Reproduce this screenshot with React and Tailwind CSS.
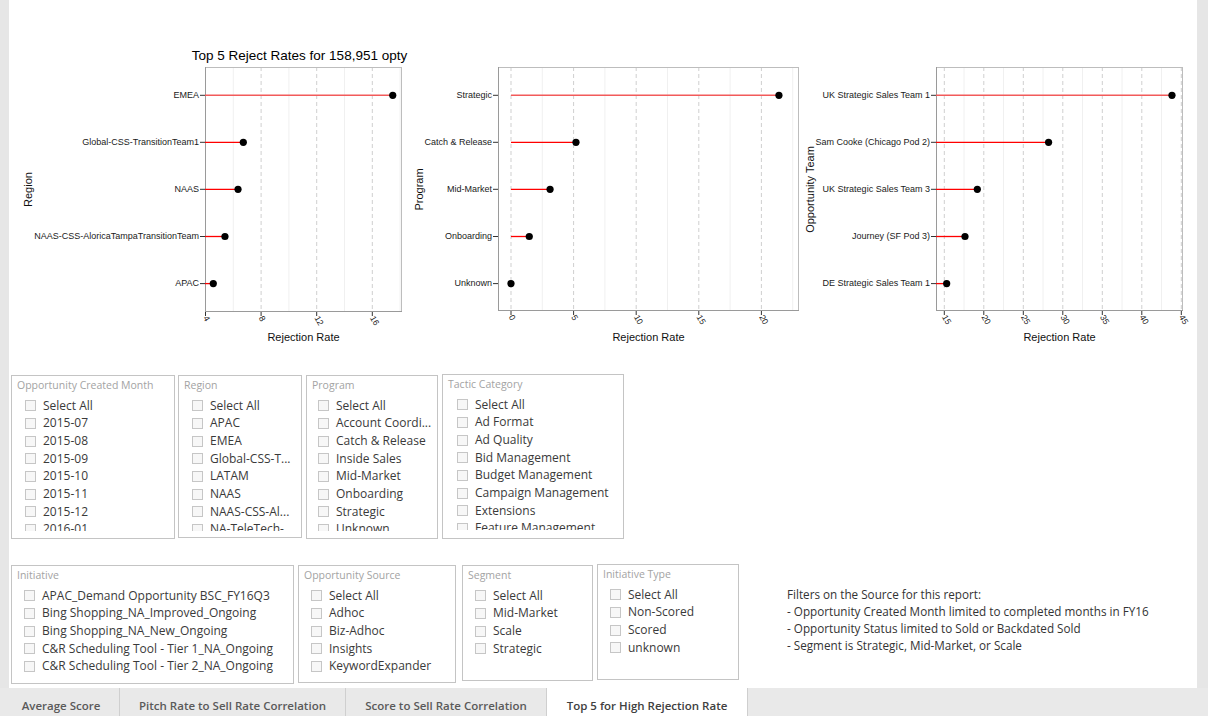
import React from 'react';

const ROWS_Y = [95.3, 142.3, 189.3, 236.5, 283.6];

const charts = [
  {
    vx: 9,
    vw: 401,
    panel: { l: 205, r: 402, t: 67, b: 312 },
    x0: 205.5,
    v0: 4,
    k: 13.9,
    ticks: [4, 8, 12, 16],
    minors: [6, 10, 14, 18],
    lineStart: 205,
    title: 'Top 5 Reject Rates for 158,951 opty',
    yTitle: 'Region',
    yTitleX: 32,
    rows: [
      ['EMEA', 17.47],
      ['Global-CSS-TransitionTeam1', 6.72],
      ['NAAS', 6.34],
      ['NAAS-CSS-AloricaTampaTransitionTeam', 5.4],
      ['APAC', 4.56],
    ],
  },
  {
    vx: 410,
    vw: 390,
    panel: { l: 498, r: 799, t: 67, b: 311 },
    x0: 511,
    v0: 0,
    k: 12.52,
    ticks: [0, 5, 10, 15, 20],
    minors: [2.5, 7.5, 12.5, 17.5, 22.5],
    lineStart: 511,
    yTitle: 'Program',
    yTitleX: 423,
    rows: [
      ['Strategic', 21.4],
      ['Catch & Release', 5.19],
      ['Mid-Market', 3.12],
      ['Onboarding', 1.46],
      ['Unknown', 0],
    ],
  },
  {
    vx: 800,
    vw: 397,
    panel: { l: 936, r: 1183, t: 67, b: 311 },
    x0: 944.3,
    v0: 15,
    k: 7.9,
    ticks: [15, 20, 25, 30, 35, 40, 45],
    minors: [17.5, 22.5, 27.5, 32.5, 37.5, 42.5],
    lineStart: 936,
    yTitle: 'Opportunity Team',
    yTitleX: 814,
    rows: [
      ['UK Strategic Sales Team 1', 43.82],
      ['Sam Cooke (Chicago Pod 2)', 28.2],
      ['UK Strategic Sales Team 3', 19.18],
      ['Journey (SF Pod 3)', 17.62],
      ['DE Strategic Sales Team 1', 15.3],
    ],
  },
];

function LollipopChart({ c }) {
  const { l, r, t, b } = c.panel;
  const sx = (v) => c.x0 + (v - c.v0) * c.k;
  const font = "'Liberation Sans', Arial, sans-serif";
  return (
    <svg width={c.vw} height={365} viewBox={`${c.vx} 0 ${c.vw} 365`} className="block shrink-0">
      {c.title && (
        <text x={299.5} y={60} textAnchor="middle" fontSize="13.5" fontFamily={font} fill="#000">
          {c.title}
        </text>
      )}
      <rect x={l} y={t} width={r - l} height={b - t} fill="#fff" />
      {c.minors.map((v) =>
        sx(v) < r ? <line key={'m' + v} x1={sx(v)} x2={sx(v)} y1={t} y2={b} stroke="#f0f0f0" strokeWidth="1" /> : null
      )}
      {c.ticks.map((v) => (
        <line key={'g' + v} x1={sx(v)} x2={sx(v)} y1={t} y2={b} stroke="#cfcfcf" strokeWidth="1" strokeDasharray="4 3" />
      ))}
      <rect x={l + 0.5} y={t + 0.5} width={r - l - 1} height={b - t - 1} fill="none" stroke="#bdbdbd" />
      <line x1={l + 0.5} x2={l + 0.5} y1={t} y2={b} stroke="#9a9a9a" />
      <line x1={l} x2={r} y1={b - 0.5} y2={b - 0.5} stroke="#9a9a9a" />
      {c.rows.map(([name, v], i) => {
        const y = ROWS_Y[i];
        return (
          <g key={name}>
            <line x1={l - 5} x2={l} y1={y} y2={y} stroke="#333" strokeWidth="1" />
            <text x={l - 6} y={y + 2.6} textAnchor="end" fontSize="9" fontFamily={font} fill="#1a1a1a">
              {name}
            </text>
            <line
              x1={c.lineStart}
              x2={sx(v)}
              y1={y}
              y2={y}
              stroke={i === 0 ? '#f25a5a' : '#ff0000'}
              strokeWidth={i === 0 ? 1.6 : 1.3}
            />
            <circle cx={sx(v)} cy={y} r={3.6} fill="#000" />
          </g>
        );
      })}
      {c.ticks.map((v) => (
        <g key={'t' + v}>
          <line x1={sx(v)} x2={sx(v)} y1={b} y2={b + 4} stroke="#333" />
          <text
            x={sx(v) - 2.5}
            y={b + 6}
            transform={`rotate(60 ${sx(v) - 2.5} ${b + 6})`}
            fontSize="8.5"
            fontFamily={font}
            fill="#222"
          >
            {v}
          </text>
        </g>
      ))}
      <text x={(l + r) / 2} y={341} textAnchor="middle" fontSize="11" fontFamily={font} fill="#111">
        Rejection Rate
      </text>
      <text
        x={c.yTitleX}
        y={189.5}
        transform={`rotate(-90 ${c.yTitleX} 189.5)`}
        textAnchor="middle"
        fontSize="11"
        fontFamily={font}
        fill="#111"
      >
        {c.yTitle}
      </text>
    </svg>
  );
}

function Slicer({ title, items, className, listH = 'h-[136px]', pl = 'pl-[13px]' }) {
  return (
    <div className={`border border-[#c4c4c4] bg-white overflow-hidden shrink-0 ${className}`}>
      <div className="pl-[5px] pt-[1px] h-[19px] text-[10.5px] leading-[16px] text-[#a3a3a3]">{title}</div>
      <div className={`${pl} pt-[2px] ${listH} overflow-hidden`}>
        {items.map((it) => (
          <div key={it} className="flex items-center h-[17.67px] whitespace-nowrap">
            <span className="w-[11px] h-[11px] border border-[#c6c6c6] bg-[#f7f7f7] shrink-0" />
            <span className="ml-[7px] text-[12px] text-[#3a3a3a] leading-none">{it}</span>
          </div>
        ))}
      </div>
    </div>
  );
}

const tabs = [
  { label: 'Average Score', w: 'w-[117px]' },
  { label: 'Pitch Rate to Sell Rate Correlation', w: 'w-[226px]' },
  { label: 'Score to Sell Rate Correlation', w: 'w-[201px]' },
  { label: 'Top 5 for High Rejection Rate', w: 'w-[201px]', active: true },
];

export default function App() {
  return (
    <div className="w-[1208px] h-[716px] flex flex-col bg-[#e6e6e6] overflow-hidden" style={{ fontFamily: "'Open Sans', 'Noto Sans', sans-serif" }}>
      <div className="h-[688px] flex shrink-0">
        <div className="w-[9px] shrink-0" />
        <div className="w-[1188px] bg-white flex flex-col">
          <div className="flex h-[365px]">
            {charts.map((c, i) => (
              <LollipopChart key={i} c={c} />
            ))}
          </div>

          <div className="flex items-start pl-[2px] mt-[9px]">
            <Slicer
              className="w-[164px] h-[164px] mt-[1px]"
              pl="pl-[13px]"
              title="Opportunity Created Month"
              items={['Select All', '2015-07', '2015-08', '2015-09', '2015-10', '2015-11', '2015-12', '2016-01']}
            />
            <Slicer
              className="w-[124px] h-[163px] ml-[3px] mt-[1px]"
              title="Region"
              items={['Select All', 'APAC', 'EMEA', 'Global-CSS-T...', 'LATAM', 'NAAS', 'NAAS-CSS-Al...', 'NA-TeleTech-']}
            />
            <Slicer
              className="w-[132px] h-[164px] ml-[4px] mt-[1px]"
              pl="pl-[11px]"
              title="Program"
              items={['Select All', 'Account Coordi...', 'Catch & Release', 'Inside Sales', 'Mid-Market', 'Onboarding', 'Strategic', 'Unknown']}
            />
            <Slicer
              className="w-[182px] h-[165px] ml-[4px]"
              pl="pl-[14px]"
              title="Tactic Category"
              items={['Select All', 'Ad Format', 'Ad Quality', 'Bid Management', 'Budget Management', 'Campaign Management', 'Extensions', 'Feature Management']}
            />
          </div>

          <div className="flex items-start pl-[2px] mt-[25px]">
            <Slicer
              className="w-[283px] h-[119px] mt-[1px]"
              pl="pl-[12px]"
              listH="h-[96px]"
              title="Initiative"
              items={[
                'APAC_Demand Opportunity BSC_FY16Q3',
                'Bing Shopping_NA_Improved_Ongoing',
                'Bing Shopping_NA_New_Ongoing',
                'C&R Scheduling Tool - Tier 1_NA_Ongoing',
                'C&R Scheduling Tool - Tier 2_NA_Ongoing',
              ]}
            />
            <Slicer
              className="w-[158px] h-[118px] ml-[4px] mt-[1px]"
              pl="pl-[12px]"
              listH="h-[96px]"
              title="Opportunity Source"
              items={['Select All', 'Adhoc', 'Biz-Adhoc', 'Insights', 'KeywordExpander']}
            />
            <Slicer
              className="w-[131px] h-[116px] ml-[6px] mt-[1px]"
              pl="pl-[12px]"
              listH="h-[94px]"
              title="Segment"
              items={['Select All', 'Mid-Market', 'Scale', 'Strategic']}
            />
            <Slicer
              className="w-[142px] h-[116px] ml-[4px]"
              pl="pl-[12px]"
              listH="h-[94px]"
              title="Initiative Type"
              items={['Select All', 'Non-Scored', 'Scored', 'unknown']}
            />
            <div className="ml-[48px] mt-[22px] text-[11.7px] leading-[17px] text-[#333]">
              <div>Filters on the Source for this report:</div>
              <div>- Opportunity Created Month limited to completed months in FY16</div>
              <div>- Opportunity Status limited to Sold or Backdated Sold</div>
              <div>- Segment is Strategic, Mid-Market, or Scale</div>
            </div>
          </div>
        </div>
        <div className="flex-1" />
      </div>

      <div className="h-[28px] flex bg-[#e9e9e9] shrink-0 pl-[3px]">
        {tabs.map((t) => (
          <div
            key={t.label}
            className={`${t.w} h-full flex items-center justify-center pt-[8px] border-r border-[#cfcfcf] text-[11.5px] font-semibold ${
              t.active ? 'bg-white text-[#404040]' : 'text-[#5a5a5a]'
            }`}
          >
            {t.label}
          </div>
        ))}
      </div>
    </div>
  );
}
